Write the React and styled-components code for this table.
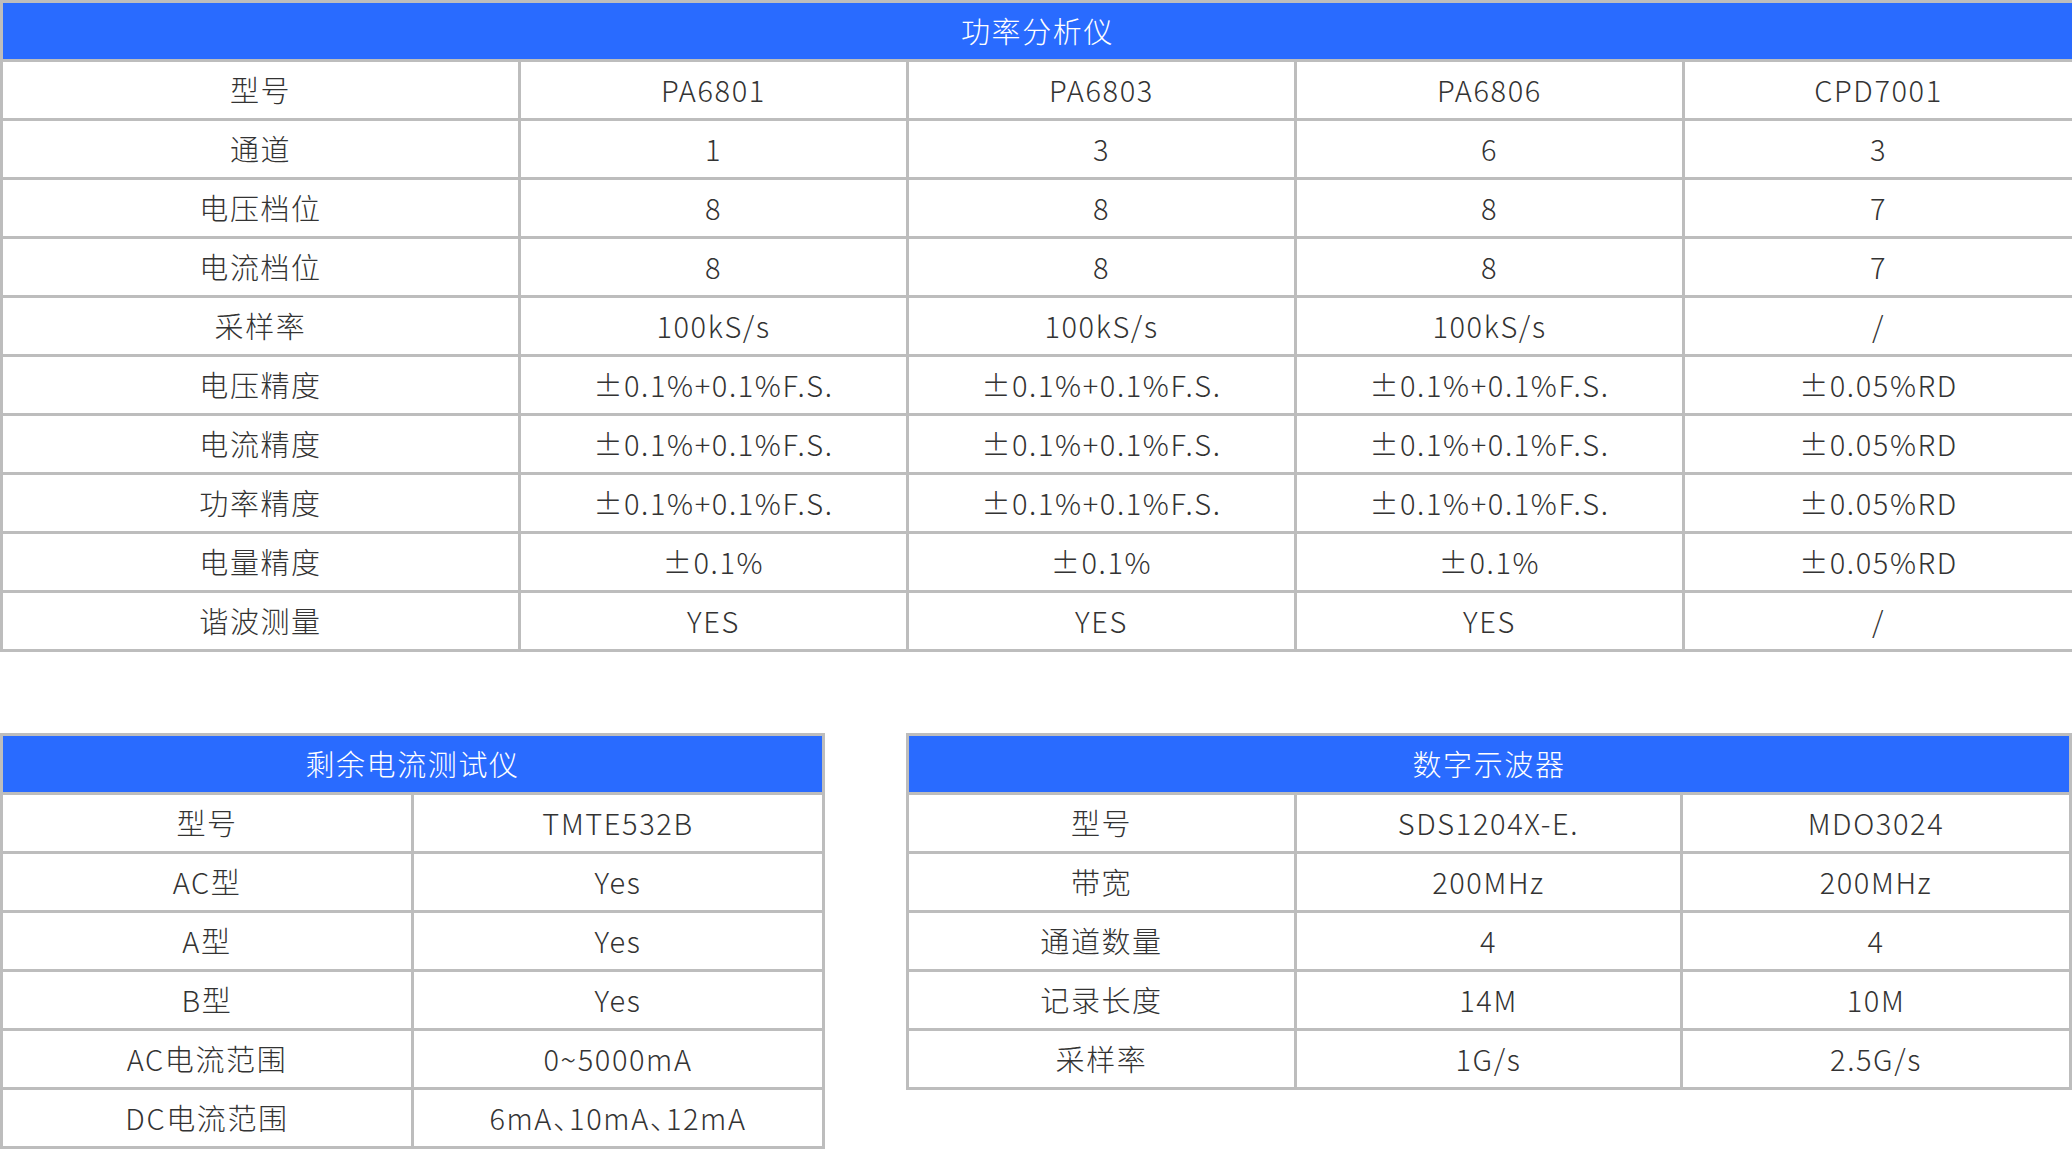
import React from 'react';
import styled, { createGlobalStyle } from 'styled-components';

const GlobalStyle = createGlobalStyle`
	html, body {
		margin: 0;
		padding: 0;
		background: #ffffff;
	}
	body {
		font-family: 'Noto Sans CJK SC', 'Noto Sans', sans-serif;
		font-weight: 300;
		color: #333333;
	}
`;

const powerCols = ['518px', '388px', '388px', '388px', '390px'];
const powerRows = [
	['型号', 'PA6801', 'PA6803', 'PA6806', 'CPD7001'],
	['通道', '1', '3', '6', '3'],
	['电压档位', '8', '8', '8', '7'],
	['电流档位', '8', '8', '8', '7'],
	['采样率', '100kS/s', '100kS/s', '100kS/s', '/'],
	['电压精度', '±0.1%+0.1%F.S.', '±0.1%+0.1%F.S.', '±0.1%+0.1%F.S.', '±0.05%RD'],
	['电流精度', '±0.1%+0.1%F.S.', '±0.1%+0.1%F.S.', '±0.1%+0.1%F.S.', '±0.05%RD'],
	['功率精度', '±0.1%+0.1%F.S.', '±0.1%+0.1%F.S.', '±0.1%+0.1%F.S.', '±0.05%RD'],
	['电量精度', '±0.1%', '±0.1%', '±0.1%', '±0.05%RD'],
	['谐波测量', 'YES', 'YES', 'YES', '/'],
];

const rcdCols = ['411px', '411px'];
const rcdRows = [
	['型号', 'TMTE532B'],
	['AC型', 'Yes'],
	['A型', 'Yes'],
	['B型', 'Yes'],
	['AC电流范围', '0~5000mA'],
	['DC电流范围', '6mA、10mA、12mA'],
];

const scopeCols = ['388px', '386px', '389px'];
const scopeRows = [
	['型号', 'SDS1204X-E.', 'MDO3024'],
	['带宽', '200MHz', '200MHz'],
	['通道数量', '4', '4'],
	['记录长度', '14M', '10M'],
	['采样率', '1G/s', '2.5G/s'],
];

const SpecTable = ({ title, cols, rows, width }) => (
	<Table $width={width}>
		<colgroup>
			{cols.map((w, idx) => (
				<col key={idx} style={{ width: w }} />
			))}
		</colgroup>
		<thead>
			<tr>
				<HeadCell colSpan={cols.length}>{title}</HeadCell>
			</tr>
		</thead>
		<tbody>
			{rows.map((row, idx) => (
				<tr key={idx}>
					{row.map((el, i) => (
						<Cell key={i}>{el}</Cell>
					))}
				</tr>
			))}
		</tbody>
	</Table>
);

const App = () => {
	return (
		<Page>
			<GlobalStyle />
			<SpecTable title="功率分析仪" cols={powerCols} rows={powerRows} width="2072px" />
			<BottomWrap>
				<SpecTable title="剩余电流测试仪" cols={rcdCols} rows={rcdRows} width="822px" />
				<SpecTable title="数字示波器" cols={scopeCols} rows={scopeRows} width="1163px" />
			</BottomWrap>
		</Page>
	);
};

export default App;

const Page = styled.div`
	width: 2072px;
	height: 1150px;
	overflow: hidden;
`;
const BottomWrap = styled.div`
	display: flex;
	justify-content: space-between;
	align-items: flex-start;
	margin-top: 81px;
`;
const Table = styled.table`
	width: ${(p) => p.$width};
	table-layout: fixed;
	border-collapse: collapse;
	border: 3px solid #bdbdbd;
`;
const HeadCell = styled.th`
	height: 54px;
	padding: 0 0 2px;
	background: #296bff;
	color: #ffffff;
	font-size: 29px;
	font-weight: 300;
	letter-spacing: 1.6px;
	text-align: center;
	border: 3px solid #bdbdbd;
`;
const Cell = styled.td`
	height: 54px;
	padding: 0 0 2px;
	font-size: 29px;
	letter-spacing: 1.6px;
	font-feature-settings: 'halt';
	text-align: center;
	color: #333333;
	border: 3px solid #bdbdbd;
	white-space: nowrap;
`;
